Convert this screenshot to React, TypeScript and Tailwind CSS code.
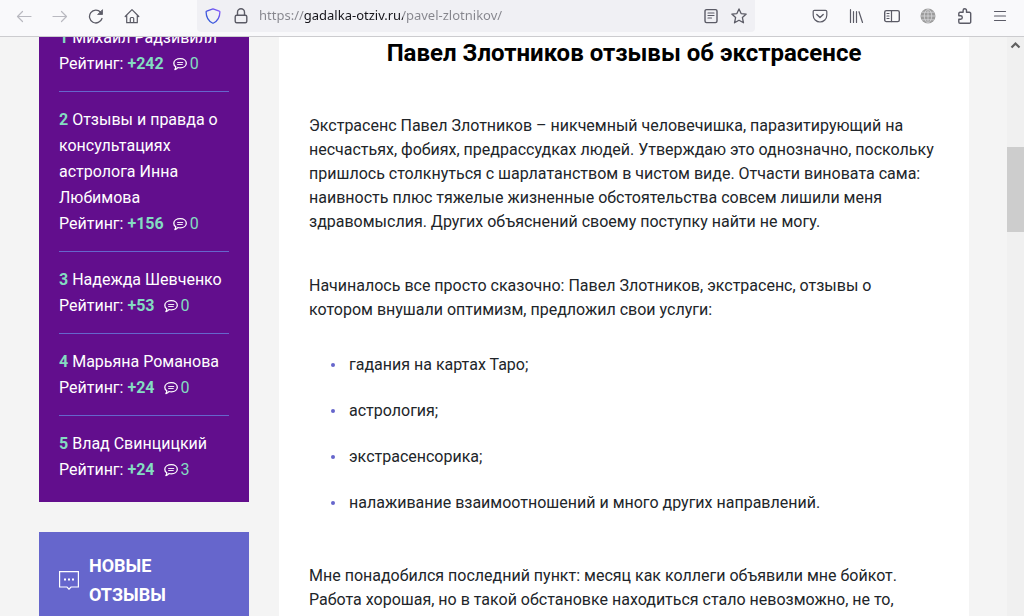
import React from 'react';

interface IconProps {
  children: React.ReactNode;
  className?: string;
}

interface ToolButtonProps {
  label: string;
  disabled?: boolean;
  children: React.ReactNode;
}

interface Psychic {
  name: string;
  rating: string;
  comments: number;
}

const psychics: Psychic[] = [
  { name: 'Михаил Радзивилл', rating: '+242', comments: 0 },
  {
    name: 'Отзывы и правда о консультациях астролога Инна Любимова',
    rating: '+156',
    comments: 0,
  },
  { name: 'Надежда Шевченко', rating: '+53', comments: 0 },
  { name: 'Марьяна Романова', rating: '+24', comments: 0 },
  { name: 'Влад Свинцицкий', rating: '+24', comments: 3 },
];

const services = [
  'гадания на картах Таро;',
  'астрология;',
  'экстрасенсорика;',
  'налаживание взаимоотношений и много других направлений.',
];

const Icon = ({ children, className = 'size-4' }: IconProps) => (
  <svg
    viewBox="0 0 16 16"
    fill="none"
    stroke="currentColor"
    strokeWidth="1.2"
    strokeLinecap="round"
    strokeLinejoin="round"
    aria-hidden="true"
    className={`shrink-0 ${className}`}
  >
    {children}
  </svg>
);

const ToolButton = ({ label, disabled, children }: ToolButtonProps) => (
  <button
    type="button"
    aria-label={label}
    disabled={disabled}
    className="flex h-8 w-9 items-center justify-center text-[#5b5b66] disabled:text-[#b9b9c0]"
  >
    {children}
  </button>
);

const Toolbar = () => (
  <header className="flex h-[37px] shrink-0 items-start justify-between border-b border-[#cccccf] bg-[#f9f9fb] px-[6px]">
    <nav className="flex">
      <ToolButton label="Back" disabled>
        <Icon>
          <path d="M15 8.5H1.5M6.5 3.5l-5 5 5 5" />
        </Icon>
      </ToolButton>
      <ToolButton label="Forward" disabled>
        <Icon>
          <path d="M1 8.5h13.5M9.5 3.5l5 5-5 5" />
        </Icon>
      </ToolButton>
      <ToolButton label="Reload">
        <Icon>
          <path d="M14 10.5A6.400 6.400 0 1 1 12.600 4.200" strokeWidth="1.300" />
          <path d="M14.500 2v4.500H10z" fill="currentColor" strokeWidth="0.800" />
        </Icon>
      </ToolButton>
      <ToolButton label="Home">
        <Icon>
          <path d="M1.200 8.500 8 1.700l6.800 6.800M2.700 7.500v7.200h10.600V7.500M6.300 14.500V10.500a1 1 0 0 1 1-1h1.400a1 1 0 0 1 1 1v4" />
        </Icon>
      </ToolButton>
    </nav>

    <form className="mx-[47px] flex h-8 min-w-0 flex-1 items-center rounded-b bg-[#f0f0f4] px-2 text-[#5b5b66]">
      <svg viewBox="0 0 16 16" fill="none" aria-hidden="true" className="size-4 shrink-0">
        <defs>
          <linearGradient id="shield" x1="0" y1="1" x2="1" y2="0">
            <stop offset="0" stopColor="#2b5fd9" />
            <stop offset="0.5" stopColor="#4a55e0" />
            <stop offset="1" stopColor="#9059ff" />
          </linearGradient>
        </defs>
        <path
          d="M8 .9 14.300 3.200c.4.100.6.500.6.900-.1 4.700-1.900 8.800-6.300 10.900a1.400 1.400 0 0 1-1.200 0C3 12.900 1.200 8.800 1.100 4.100c0-.4.200-.8.600-.9z"
          stroke="url(#shield)"
          strokeWidth="1.300"
          strokeLinejoin="round"
        />
      </svg>
      <Icon className="ml-3 size-4">
        <rect x="2.200" y="7.200" width="11.600" height="7.600" rx="1.500" strokeWidth="1.400" />
        <path d="M4.500 7V4.200a3.500 3.500 0 0 1 7 0V7" strokeWidth="1.400" />
      </Icon>
      <input
        type="text"
        aria-label="Address"
        defaultValue="https://gadalka-otziv.ru/pavel-zlotnikov/"
        className="ml-[10px] min-w-0 flex-1 bg-[linear-gradient(90deg,#85858c_45px,#15141a_45px,#15141a_144px,#85858c_144px)] bg-clip-text font-['Noto_Sans',sans-serif] text-[13px] text-transparent outline-none"
      />
      <button type="button" aria-label="Reader view" className="ml-3">
        <Icon>
          <rect x="2" y="1.600" width="12" height="13" rx="1.500" strokeWidth="1.400" />
          <path d="M5 5h6M5 7.500h6M5 10h3.500" />
        </Icon>
      </button>
      <button type="button" aria-label="Bookmark" className="ml-3">
        <Icon>
          <path d="m8 .9 2.100 4.700 5.100.5-3.800 3.500 1.100 5.200L8 12.200l-4.500 2.600 1.100-5.200L.8 6.100l5.100-.5z" strokeWidth="1.300" />
        </Icon>
      </button>
    </form>

    <div className="flex">
      <ToolButton label="Pocket">
        <Icon>
          <path d="M2.500 2.300h11a1.300 1.300 0 0 1 1.300 1.300v3.600a6.800 6.800 0 0 1-13.600 0V3.600a1.300 1.300 0 0 1 1.300-1.300z" />
          <path d="m4.800 6.500 3.200 3 3.200-3" strokeWidth="1.400" />
        </Icon>
      </ToolButton>
      <ToolButton label="Library">
        <Icon>
          <path d="M2.500 1.700v12.800M5.500 3.700v10.800M8.500 3.700v10.800M11 3.700l3.500 10.800" />
        </Icon>
      </ToolButton>
      <ToolButton label="Sidebars">
        <Icon>
          <rect x=".7" y="2.600" width="14.600" height="11" rx="1.700" strokeWidth="1.400" />
          <path d="M7.500 2.600v11M3 5.500h2M3 8h2M3 10.500h2" />
        </Icon>
      </ToolButton>
      <ToolButton label="Translate">
        <svg viewBox="0 0 16 16" fill="none" aria-hidden="true" className="size-4">
          <circle cx="8" cy="8" r="7.500" fill="#9c9c9c" />
          <path
            d="M8 .5v15M.5 8h15M2 4.200h12M2 11.800h12M8 .5c-5 4-5 11 0 15M8 .5c5 4 5 11 0 15"
            stroke="#e0e0e2"
            strokeWidth="0.700"
          />
        </svg>
      </ToolButton>
      <ToolButton label="Extensions">
        <Icon>
          <path
            d="M4 15.200h9.500a1.200 1.200 0 0 0 1.200-1.200V5.500a1.200 1.200 0 0 0-1.200-1.200h-3V2.500a1.700 1.700 0 0 0-3.400 0v1.800H4a1.200 1.200 0 0 0-1.200 1.200v2.300h1.800a1.700 1.700 0 0 1 0 3.400H2.800V14A1.200 1.200 0 0 0 4 15.200z"
            strokeWidth="1.400"
          />
        </Icon>
      </ToolButton>
      <ToolButton label="Menu">
        <Icon>
          <path d="M2.500 3.500h11M2.500 8h11M2.500 12.500h11" />
        </Icon>
      </ToolButton>
    </div>
  </header>
);

const CommentIcon = () => (
  <svg
    viewBox="0 0 14 14"
    fill="none"
    stroke="currentColor"
    strokeWidth="1.300"
    strokeLinejoin="round"
    aria-hidden="true"
    className="mr-[3px] ml-[9px] size-[14px] text-white"
  >
    <path d="M7.300 1.700c3.500 0 6 1.800 6 4.500s-2.600 4.600-6 4.600c-.9 0-1.700-.1-2.400-.3-.6 1-1.500 1.800-3 2.200.6-.8.900-1.800.9-2.900C1.500 9 .8 7.700.8 6.200c0-2.700 2.800-4.500 6.500-4.500z" />
    <path d="M4.200 5.500h6M4.200 7.500h5.500" strokeWidth="0.900" />
  </svg>
);

const RatingList = () => (
  <ol className="-mt-3 bg-[#620e8d] px-5 pb-[5px] text-base leading-[26px] text-white">
    {psychics.map((psychic, index) => (
      <li
        key={psychic.name}
        className="border-b border-[#6666cc] pt-[15px] pb-[14px] first:pt-0 last:border-0"
      >
        <a href="#">
          <b className="text-[#84dcc1]">{index + 1}</b> {psychic.name}
        </a>
        <div className="flex items-center">
          <span>
            Рейтинг: <b className="text-[#84dcc1]">{psychic.rating}</b>
          </span>
          <CommentIcon />
          <span className="text-[#84dcc1]">{psychic.comments}</span>
        </div>
      </li>
    ))}
  </ol>
);

const NewReviews = () => (
  <section className="mt-[30px] flex items-center gap-[10px] bg-[#6666cc] px-5 py-[19px] text-white">
    <svg
      viewBox="0 0 20 20"
      fill="none"
      stroke="currentColor"
      strokeWidth="1.200"
      aria-hidden="true"
      className="size-5 shrink-0"
    >
      <path d="M.6 1.600h18.800v15.400h-7.400l-2 2.200-2-2.200H.6z" />
      <path d="M5 9.500h2M9 9.500h2M13 9.500h2" strokeWidth="1.800" />
    </svg>
    <h2 className="text-lg leading-[29px] font-bold">НОВЫЕ ОТЗЫВЫ</h2>
  </section>
);

const Article = () => (
  <main className="min-w-0 flex-1 bg-white px-[30px] pt-[2px] text-base leading-6">
    <h1 className="text-center text-2xl leading-7 font-bold text-black">
      Павел Злотников отзывы об экстрасенсе
    </h1>
    <p className="mt-[47px]">
      Экстрасенс Павел Злотников – никчемный человечишка, паразитирующий на
      несчастьях, фобиях, предрассудках людей. Утверждаю это однозначно,
      поскольку пришлось столкнуться с шарлатанством в чистом виде. Отчасти
      виновата сама: наивность плюс тяжелые жизненные обстоятельства совсем
      лишили меня здравомыслия. Других объяснений своему поступку найти не могу.
    </p>
    <p className="mt-10">
      Начиналось все просто сказочно: Павел Злотников, экстрасенс, отзывы о
      котором внушали оптимизм, предложил свои услуги:
    </p>
    <ul className="mt-[30px] space-y-5 leading-[26px]">
      {services.map((service) => (
        <li key={service} className="flex items-center pl-[22px]">
          <span className="mr-[14px] size-1 rounded-full bg-[#6666cc]" />
          {service}
        </li>
      ))}
    </ul>
    <p className="mt-12">
      Мне понадобился последний пункт: месяц как коллеги объявили мне бойкот.
      Работа хорошая, но в такой обстановке находиться стало невозможно, не то,
    </p>
  </main>
);

const Scrollbar = () => (
  <div className="w-[17px] shrink-0 bg-[#f0f0f0]" aria-hidden="true">
    <svg
      viewBox="0 0 17 17"
      fill="none"
      stroke="#606060"
      strokeWidth="2.200"
      className="size-[17px]"
    >
      <path d="M4.500 10.500 8.500 6.500l4 4" />
    </svg>
    <div className="mt-[93px] h-[85px] bg-[#cdcdcd]" />
  </div>
);

const App = () => (
  <div className="flex h-screen flex-col overflow-hidden bg-[#f4f4f4] font-['Roboto',sans-serif] text-[#212529]">
    <Toolbar />
    <div className="flex min-h-0 flex-1">
      <div className="flex min-w-0 flex-1 gap-[30px] overflow-hidden pr-[38px] pl-[39px]">
        <aside className="w-[210px] shrink-0">
          <RatingList />
          <NewReviews />
        </aside>
        <Article />
      </div>
      <Scrollbar />
    </div>
  </div>
);

export default App;
